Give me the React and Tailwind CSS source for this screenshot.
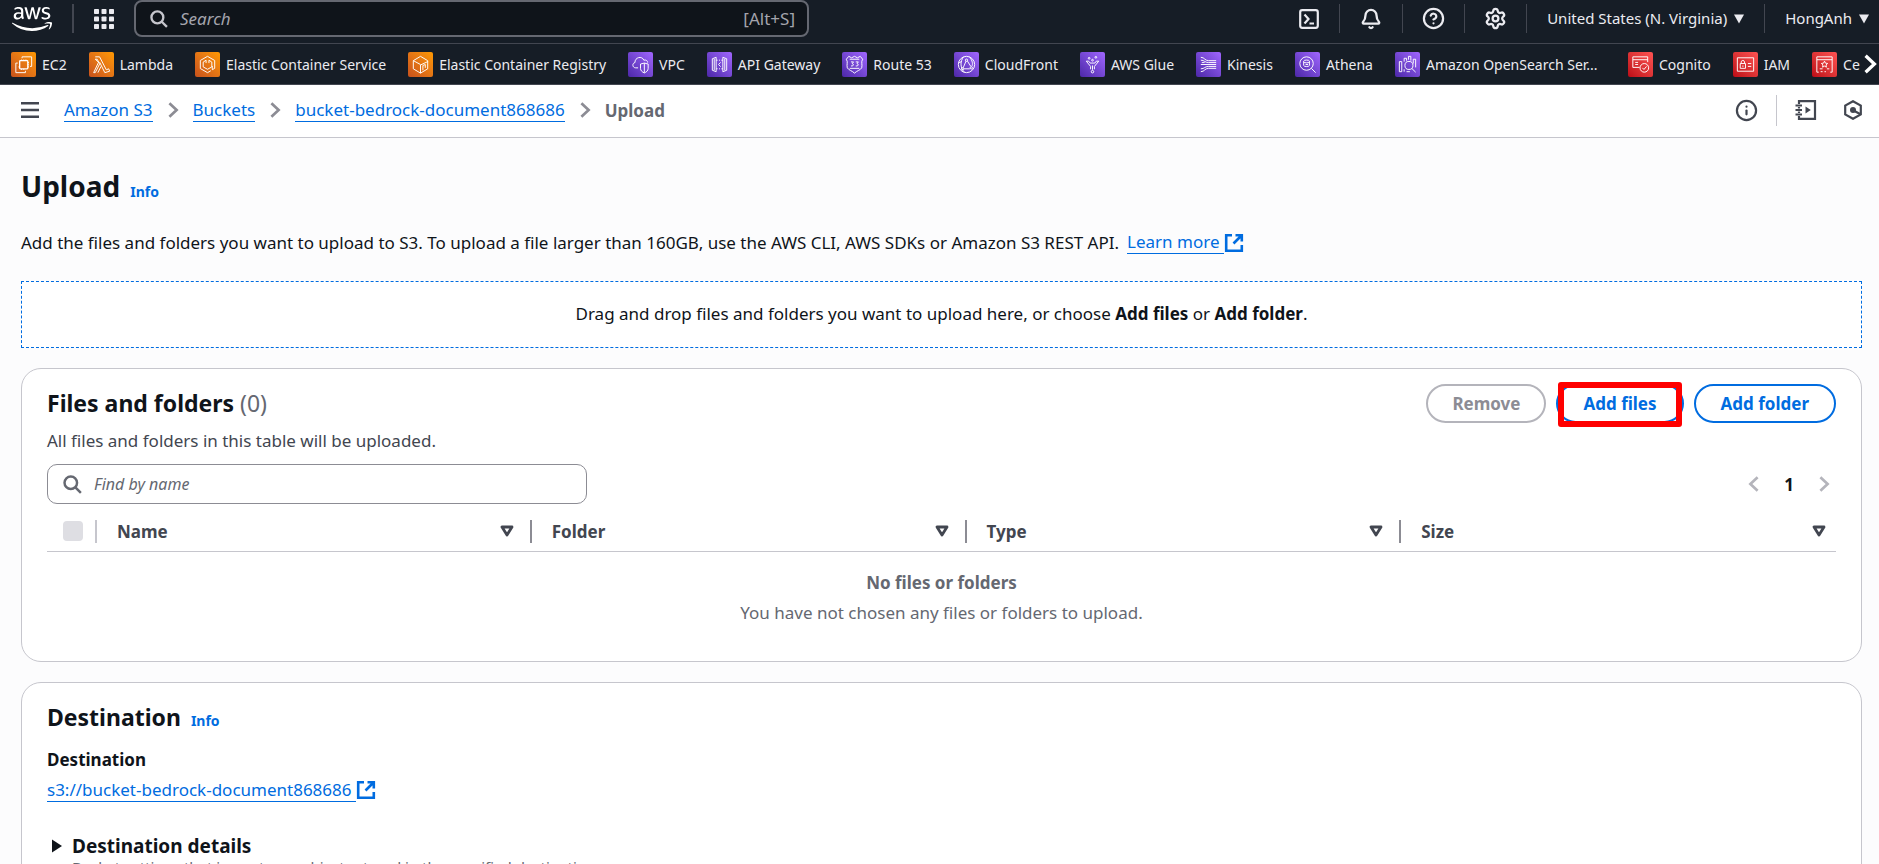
import { Bell, CircleHelp, Info, Settings } from "lucide-react";
import { FaAws } from "react-icons/fa";

const tones = {
  orange: "from-[#c8511b] to-[#ff9900]",
  purple: "from-[#4d27a8] to-[#a166ff]",
  red: "from-[#bd0816] to-[#ff5252]",
};

const glyphs = {
  ec2: (
    <>
      <rect x="8" y="8" width="8.500" height="8.500" rx="0.800" strokeWidth="1.400" />
      <path d="M10.500 5.500V4H20.500V14H18.800M6 10.500H4V20.500H14V18.600" />
      <path d="M10 8V6.800M12.300 8V6.800M14.500 8V6.800M16.500 10h1.200M16.500 12.300h1.200M16.500 14.500h1.200M10 16.500v1.200M12.300 16.500v1.200M8 14.500H6.800" />
    </>
  ),
  lambda: <path d="M5.500 4H10L17 17.500L19.500 16.500L20.500 19L15.500 20.500L10 9.500M10.300 11L5.500 20.500H3.800L9 9.500L7.500 6.500H5.500ZM8.200 20.500L11.500 14" />,
  ecs: (
    <>
      <path d="M12 3.500L19.500 7.800V16L17 17.500V13.500M12 3.500L4.500 7.800V16.200L12 20.500L15.500 18.500" />
      <path d="M10.500 7.500L7.500 9.500V14.500L12 17L16.500 14.500V9.500L13.500 7.500V10.500M10.500 7.500V10.500" />
    </>
  ),
  ecr: (
    <>
      <path d="M12 21L4.500 16.500V8L12 3.500L19.500 8V9.500M4.500 8L12 12" />
      <path d="M12 12.500L19.500 9V16.500L12 21ZM14.500 18V13L17 12V15.500" />
    </>
  ),
  vpc: (
    <>
      <path d="M9.500 15.500H7C3.500 15.500 3 10.500 6.200 10C6 4.500 13.500 2.500 15.500 7.500C18 6.700 19.500 8.500 19.500 10" />
      <path d="M12 11.500L16 10.500L20 11.500V16C20 18.500 18 20 16 20.800C14 20 12 18.500 12 16ZM16 10.500V20.500" />
    </>
  ),
  api: <path d="M8.500 4.500L4.500 6V18L8.500 19.500ZM6.500 6V18M15.500 4.500L19.500 6V18L15.500 19.500ZM17.500 6V18M8.500 7.500H10M11.500 7.500H12.500M14 7.500H15.500M8.500 16.500H10M11.500 16.500H12.500M14 16.500H15.500M13.200 9.800L11 12L13.200 14.200" />,
  route53: (
    <>
      <path d="M6 3.500L9 5L12 3.500L15 5L18 3.500L20.500 6.500C18.500 9.500 20.500 12 19.500 15.500C18 18 14.500 18.500 12 21C9.500 18.500 6 18 4.500 15.500C3.500 12 5.500 9.500 3.500 6.500Z" />
      <path d="M7 6.500H17M7 16H17M8.300 9.300H11L9.600 11.200C11.600 11.200 11.400 14 8.300 13.500M13.300 9.300H16L14.600 11.200C16.600 11.200 16.400 14 13.300 13.500" />
    </>
  ),
  cloudfront: (
    <>
      <circle cx="12" cy="12" r="8.500" />
      <path d="M9 4C5 9 5.500 16 10 20.200M15 4C18.500 8 18.800 12 17.500 14M11.500 8.500L8.500 15.500M13 8.500L16.500 14M4 10L7 9M9.500 16.500H15.500" />
      <circle cx="12" cy="7.500" r="1.200" />
      <circle cx="8" cy="16.500" r="1.200" />
      <circle cx="17" cy="15.500" r="1.200" />
    </>
  ),
  glue: (
    <>
      <path d="M5.500 8.500H8L9.500 10.500H14.500L16 8.500H18.500L14 14V17M10 17V14L5.500 8.500" />
      <circle cx="12" cy="19.500" r="1.300" />
      <circle cx="8.500" cy="5.500" r="0.900" />
      <circle cx="12" cy="7.500" r="0.900" />
      <circle cx="15.500" cy="4.500" r="0.900" />
      <path d="M12 13V17.500" />
    </>
  ),
  kinesis: <path d="M4 4.500C8 4.500 8 8 12 8H20M4 7.500C8 7.500 8 10 12 10H20M4 12H20M4 16.500C8 16.500 8 14 12 14H20M4 19.500C8 19.500 8 16 12 16H20M5 10H8" />,
  athena: (
    <>
      <circle cx="11" cy="11" r="7" />
      <path d="M16 16L20.500 20.500M8 8.500C8 7 14 7 14 8.500V13C14 14.500 8 14.500 8 13ZM8 9.500C9 10.500 13 10.500 14 9.500M10 12H12.500" />
    </>
  ),
  opensearch: (
    <>
      <circle cx="13.500" cy="13" r="4.200" />
      <path d="M16.600 16.200L20.500 20M3.500 9H6V19.500H3.500ZM8.500 19.500V17M8.500 9V5.500H11V8M13 7V3.500H15.500V8M18 11V6.500H20.500V15M11 19.500H14.500" />
    </>
  ),
  cognito: (
    <>
      <path d="M11 15H4V4H19.500V9.500M4 7H19.500M6.500 9.800H9.500M6.500 12H9.500" />
      <circle cx="16" cy="15.500" r="4.500" />
      <path d="M14 15.500L15.600 17.200L18.300 14" />
    </>
  ),
  iam: (
    <>
      <path d="M3.500 5H20.500V19H3.500Z" />
      <path d="M6.500 11H12V16H6.500ZM7.500 11V9.300C7.500 7.300 11 7.300 11 9.300V11M9.300 13V14.500M14.500 11H18M14.500 14H18" />
    </>
  ),
  cert: (
    <>
      <path d="M6 20H4V4H20V20H18M4 7H20M7 16.500H10M14.500 16.500H17M8 19.500H10M12 19.500H13.500" />
      <path d="M12 8.500L13 10.600L15.300 10.900L13.600 12.500L14 14.800L12 13.700L10 14.800L10.400 12.500L8.700 10.900L11 10.600Z" />
    </>
  ),
};

const favorites = [
  ["EC2", "orange", "ec2"],
  ["Lambda", "orange", "lambda"],
  ["Elastic Container Service", "orange", "ecs"],
  ["Elastic Container Registry", "orange", "ecr"],
  ["VPC", "purple", "vpc"],
  ["API Gateway", "purple", "api"],
  ["Route 53", "purple", "route53"],
  ["CloudFront", "purple", "cloudfront"],
  ["AWS Glue", "purple", "glue"],
  ["Kinesis", "purple", "kinesis"],
  ["Athena", "purple", "athena"],
  ["Amazon OpenSearch Ser...", "purple", "opensearch", "w-[180px]"],
  ["Cognito", "red", "cognito"],
  ["IAM", "red", "iam"],
  ["Ce", "red", "cert"],
];

const columns = ["Name", "Folder", "Type", "Size"];

function Chevron({ left, className }) {
  return (
    <svg viewBox="0 0 16 20" fill="none" stroke="currentColor" strokeWidth="3" className={className} aria-hidden="true">
      <path d={left ? "M12 2.500L4 10L12 17.500" : "M4 2.500L12 10L4 17.500"} />
    </svg>
  );
}

function SearchIcon({ className }) {
  return (
    <svg viewBox="0 0 20 20" fill="none" stroke="currentColor" strokeWidth="2.600" className={className} aria-hidden="true">
      <circle cx="8.200" cy="8.200" r="6.600" />
      <path d="M12.800 12.800L18.800 18.800" />
    </svg>
  );
}

function ExternalIcon() {
  return (
    <svg viewBox="0 0 20 20" fill="none" stroke="currentColor" strokeWidth="2.600" className="size-[20px] shrink-0" aria-hidden="true">
      <path d="M8 2.200H2.200V17.800H17.800V12M11.500 2.200H17.800V8.500M17.500 2.500L9.500 10.500" />
    </svg>
  );
}

function Caret() {
  return (
    <svg viewBox="0 0 10 10" className="size-[10px]" fill="currentColor" aria-hidden="true">
      <path d="M0 0.500H10L5 9.500Z" />
    </svg>
  );
}

function ExternalLink({ children }) {
  return (
    <a href="#" className="inline-flex items-center text-[#006ce0]">
      <span className="border-b border-[#006ce0] pr-1 leading-[22px]">{children}</span>
      <ExternalIcon />
    </a>
  );
}

function TopBar() {
  return (
    <div className="flex h-[44px] border-b border-[#424650] pb-[6px] text-[15px]">
      <a href="#" aria-label="AWS home" className="flex w-[72px] items-center pl-3 text-white">
        <FaAws className="size-[40px]" />
      </a>
      <span className="my-1 w-[2px] bg-[#424650]" />
      <button type="button" aria-label="Services" className="flex w-[60px] items-center justify-center">
        <svg viewBox="0 0 20 20" className="size-[20px]" fill="#ebebf0" aria-hidden="true">
          {[0, 7.500, 15].map((y) => [0, 7.500, 15].map((x) => <rect key={`${x}-${y}`} x={x} y={y} width="5" height="5" rx="0.800" />))}
        </svg>
      </button>
      <label className="flex w-[675px] items-center gap-3 rounded-lg border-2 border-[#656871] bg-[#0f141a] px-3 text-[#c6c6cd]">
        <SearchIcon className="ml-[2px] size-[18px] shrink-0" />
        <input type="text" aria-label="Search" placeholder="Search" className="min-w-0 flex-1 bg-transparent text-[17px] outline-none placeholder:text-[#a4a4ad] placeholder:italic" />
        <span className="text-[17px] text-[#a4a4ad]">[Alt+S]</span>
      </label>
      <div className="ml-auto flex items-center text-[#ebebf0]">
        <button type="button" aria-label="CloudShell" className="flex w-[61px] justify-center">
          <svg viewBox="0 0 20 20" fill="none" stroke="currentColor" strokeWidth="2.200" className="size-[20px]" aria-hidden="true">
            <rect x="1.200" y="1.200" width="17.600" height="17.600" rx="2" />
            <path d="M5.500 5.500L9.500 10L5.500 14.500M10.500 14.500H15" />
          </svg>
        </button>
        <span className="h-[29px] w-px bg-[#424650]" />
        <button type="button" aria-label="Notifications" className="flex w-[62px] justify-center"><Bell size={22} strokeWidth={2.500} /></button>
        <span className="h-[29px] w-px bg-[#424650]" />
        <button type="button" aria-label="Help" className="flex w-[61px] justify-center"><CircleHelp size={23} strokeWidth={2.300} /></button>
        <span className="h-[29px] w-px bg-[#424650]" />
        <button type="button" aria-label="Settings" className="flex w-[61px] justify-center"><Settings size={23} strokeWidth={2.400} /></button>
        <span className="h-[29px] w-px bg-[#424650]" />
        <button type="button" className="flex items-center gap-[7px] px-[20px]">United States (N. Virginia) <Caret /></button>
        <span className="h-[29px] w-px bg-[#424650]" />
        <button type="button" className="flex items-center gap-[7px] pr-[10px] pl-[20px]">HongAnh <Caret /></button>
      </div>
    </div>
  );
}

function FavoritesBar() {
  return (
    <nav aria-label="Favorites" className="flex h-[41px] items-center border-b border-[#424650] pl-[11px] text-[14px]">
      <ul className="flex min-w-0 flex-1 gap-[22px] overflow-hidden">
        {favorites.map(([name, tone, glyph, width = ""]) => (
          <li key={name} className="shrink-0">
            <a href="#" className="flex items-center gap-[6px] text-[#ebebf0]">
              <span className={`flex size-[25px] shrink-0 items-center justify-center rounded-[2px] bg-linear-to-tr ${tones[tone]}`}>
                <svg viewBox="0 0 24 24" fill="none" stroke="#fff" strokeWidth="1" className="size-[23px]" aria-hidden="true">{glyphs[glyph]}</svg>
              </span>
              <span className={width}>{name}</span>
            </a>
          </li>
        ))}
      </ul>
      <button type="button" aria-label="Scroll favorites" className="flex w-[18px] shrink-0 justify-end text-white">
        <Chevron className="h-[22px] w-[18px]" />
      </button>
    </nav>
  );
}

function Breadcrumbs() {
  return (
    <div className="flex h-[53px] shrink-0 items-center border-b border-[#c6c6cd] bg-white pr-4 pb-[2px] pl-[21px] text-[#424650]">
      <button type="button" aria-label="Open navigation" className="mr-[25px]">
        <svg viewBox="0 0 18 16" className="h-[16px] w-[18px]" stroke="currentColor" strokeWidth="2.400" aria-hidden="true">
          <path d="M0 1.200H18M0 8H18M0 14.800H18" />
        </svg>
      </button>
      <nav aria-label="Breadcrumbs">
        <ol className="flex items-center gap-3">
          {["Amazon S3", "Buckets", "bucket-bedrock-document868686"].map((c) => (
            <li key={c} className="flex items-center gap-3">
              <a href="#" className="border-b border-[#006ce0] leading-[22px] text-[#006ce0]">{c}</a>
              <Chevron className="h-[18px] w-[16px] text-[#8c8c94]" />
            </li>
          ))}
          <li className="font-bold text-[#656871]">Upload</li>
        </ol>
      </nav>
      <div className="ml-auto flex items-center">
        <button type="button" aria-label="Info"><Info size={23} strokeWidth={2.300} /></button>
        <span className="mr-[18px] ml-[18px] h-[31px] w-px bg-[#c6c6cd]" />
        <button type="button" aria-label="Tutorials" className="mr-[26px]">
          <svg viewBox="0 0 22 20" fill="none" stroke="currentColor" strokeWidth="2.200" className="h-[20px] w-[22px]" aria-hidden="true">
            <path d="M4 4V1.200H20V18.800H4V16M4 7V8.500M4 11.500V13" />
            <path d="M0.500 5.500H7M0.500 10H7M0.500 14.500H7" strokeWidth="1.900" />
            <path d="M10.500 6.500L15.800 10L10.500 13.500Z" fill="currentColor" stroke="none" />
          </svg>
        </button>
        <button type="button" aria-label="Diagnostics">
          <svg viewBox="0 0 20 20" fill="none" stroke="currentColor" strokeWidth="2.200" className="size-[20px]" aria-hidden="true">
            <path d="M10 1.200L17.800 5.600V14.400L10 18.800L2.200 14.400V5.600Z" />
            <circle cx="10" cy="10" r="3" fill="currentColor" stroke="none" />
            <path d="M10.500 10.500L17 14" />
          </svg>
        </button>
      </div>
    </div>
  );
}

function FilesCard() {
  return (
    <section className="rounded-[20px] border border-[#c6c6cd] bg-white px-[25px] pt-[15px] pb-[33px]">
      <div className="flex items-start justify-between">
        <div>
          <h2 className="text-[23px] leading-[38px] font-bold text-[#0f141a]">
            Files and folders <span className="font-normal text-[#656871]">(0)</span>
          </h2>
          <p className="mt-[6px] leading-[25px] text-[#424650]">All files and folders in this table will be uploaded.</p>
        </div>
        <div className="flex gap-[10px] font-bold">
          <button type="button" disabled className="h-[39px] rounded-full border-2 border-[#b4b4bb] px-[24px] text-[#8c8c94]">Remove</button>
          <div className="relative">
            <button type="button" className="h-[39px] rounded-full border-2 border-[#006ce0] px-[25px] text-[#006ce0]">Add files</button>
            <span className="pointer-events-none absolute inset-x-[2px] -top-[2px] -bottom-[4px] rounded-[3px] border-[6px] border-[#ff0000]" />
          </div>
          <button type="button" className="h-[39px] rounded-full border-2 border-[#006ce0] px-[25px] text-[#006ce0]">Add folder</button>
        </div>
      </div>

      <div className="mt-[11px] flex items-center justify-between">
        <label className="flex h-[40px] w-[540px] items-center gap-3 rounded-[10px] border border-[#8c8c94] px-[15px] text-[#656871]">
          <SearchIcon className="size-[19px] shrink-0" />
          <input type="text" aria-label="Find by name" placeholder="Find by name" className="min-w-0 flex-1 bg-transparent text-[16px] outline-none placeholder:text-[#656871] placeholder:italic" />
        </label>
        <div className="flex items-center gap-[22px] pr-1 text-[#b4b4bb]">
          <button type="button" aria-label="Previous page" disabled><Chevron left className="h-[18px] w-[16px]" /></button>
          <button type="button" className="font-bold text-[#0f141a]">1</button>
          <button type="button" aria-label="Next page" disabled><Chevron className="h-[18px] w-[16px]" /></button>
        </div>
      </div>

      <table className="mt-[8px] w-full table-fixed">
        <thead>
          <tr className="h-[39px] border-b border-[#c6c6cd] text-left text-[#424650]">
            <th className="w-[50px]">
              <div className="flex h-[23px] items-center border-r-2 border-[#c6c6cd] pl-4">
                <input type="checkbox" disabled aria-label="Select all" className="size-[20px] appearance-none rounded bg-[#dedee3]" />
              </div>
            </th>
            {columns.map((name, i) => (
              <th key={name}>
                <div className={`flex h-[23px] items-center justify-between pl-[20px] ${i < 3 ? "border-r-2 border-[#8c8c94] pr-[16px]" : "pr-[10px]"}`}>
                  {name}
                  <button type="button" aria-label={`Sort by ${name}`}>
                    <svg viewBox="0 0 14 12" fill="none" stroke="currentColor" strokeWidth="2.800" strokeLinejoin="round" className="h-[12px] w-[14px]" aria-hidden="true">
                      <path d="M2 2H12L7 10Z" />
                    </svg>
                  </button>
                </div>
              </th>
            ))}
          </tr>
        </thead>
        <tbody>
          <tr>
            <td colSpan={5} className="pt-[16px] text-center leading-[30px] text-[#656871]">
              <p className="font-bold">No files or folders</p>
              <p>You have not chosen any files or folders to upload.</p>
            </td>
          </tr>
        </tbody>
      </table>
    </section>
  );
}

function DestinationCard() {
  return (
    <section className="rounded-[20px] border border-[#c6c6cd] bg-white px-[25px] pt-[15px] pb-6 text-[#0f141a]">
      <div className="flex items-baseline gap-[10px]">
        <h2 className="text-[23px] leading-[38px] font-bold">Destination</h2>
        <a href="#" className="text-[14px] font-bold text-[#006ce0]">Info</a>
      </div>
      <h3 className="mt-[11px] leading-[25px] font-bold">Destination</h3>
      <p className="mt-[7px] flex leading-[25px]"><ExternalLink>s3://bucket-bedrock-document868686</ExternalLink></p>
      <button type="button" className="mt-[32px] flex items-center gap-[10px] pl-[5px] text-[19px] leading-[25px] font-bold">
        <svg viewBox="0 0 10 14" className="h-[14px] w-[10px]" fill="currentColor" aria-hidden="true"><path d="M0 0.500L10 7L0 13.500Z" /></svg>
        Destination details
      </button>
      <p className="pl-[25px] text-[15px] leading-[16px] text-[#656871]">
        Bucket settings that impact new objects stored in the specified destination.
      </p>
    </section>
  );
}

export default function App() {
  return (
    <div className="flex h-screen flex-col overflow-hidden bg-[#fcfcfd] font-['Noto_Sans',sans-serif] text-[17px] leading-[25px] text-[#0f141a]">
      <header className="shrink-0 bg-[#161d26]">
        <TopBar />
        <FavoritesBar />
      </header>
      <Breadcrumbs />
      <main className="flex min-h-0 flex-1 flex-col pt-[28px] pr-[17px] pl-[21px]">
        <div className="flex items-baseline gap-[10px]">
          <h1 className="text-[28px] leading-[40px] font-bold">Upload</h1>
          <a href="#" className="text-[14px] font-bold text-[#006ce0]">Info</a>
        </div>
        <p className="mt-[24px] flex gap-[8px]">
          Add the files and folders you want to upload to S3. To upload a file larger than 160GB, use the AWS CLI, AWS SDKs or Amazon S3 REST API.
          <ExternalLink>Learn more</ExternalLink>
        </p>
        <div className="mt-[26px] border border-dashed border-[#006ce0] bg-white pt-[19px] pb-[21px] text-center">
          Drag and drop files and folders you want to upload here, or choose <b>Add files</b> or <b>Add folder</b>.
        </div>
        <div className="mt-[20px] flex flex-col gap-[20px]">
          <FilesCard />
          <DestinationCard />
        </div>
      </main>
    </div>
  );
}
